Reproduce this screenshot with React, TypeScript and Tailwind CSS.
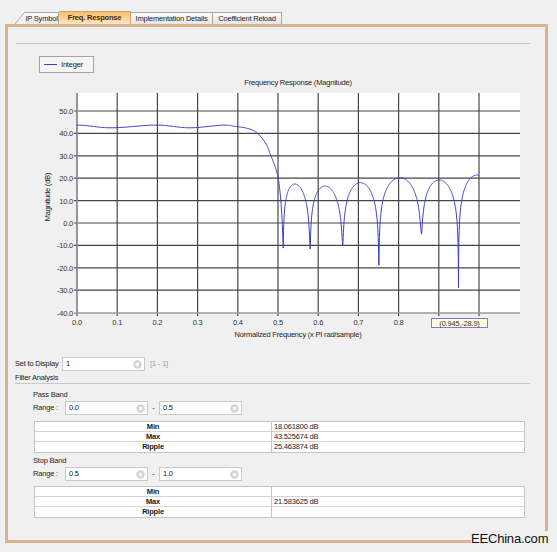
import React from 'react';

// plot mapping (page coordinates)
const X0 = 77;
const XS = 402;
const Y0 = 223;
const YS = 2.24;
const fx = (f: number) => X0 + f * XS;
const fy = (d: number) => Y0 - d * YS;

type Pt = [number, number];

function catmull(pts: Pt[], steps: number): Pt[] {
  const out: Pt[] = [];
  for (let i = 0; i < pts.length - 1; i++) {
    const p0 = pts[Math.max(0, i - 1)];
    const p1 = pts[i];
    const p2 = pts[i + 1];
    const p3 = pts[Math.min(pts.length - 1, i + 2)];
    for (let s = 1; s <= steps; s++) {
      const t = s / steps;
      const t2 = t * t;
      const t3 = t2 * t;
      const c = (a: number, b: number, cc: number, d: number) =>
        0.5 * (2 * b + (-a + cc) * t + (2 * a - 5 * b + 4 * cc - d) * t2 + (-a + 3 * b - 3 * cc + d) * t3);
      out.push([c(p0[0], p1[0], p2[0], p3[0]), c(p0[1], p1[1], p2[1], p3[1])]);
    }
  }
  return out;
}

function buildCurve(): string {
  const pts: Pt[] = [];

  // passband ripple
  const pass: Pt[] = [[0, 43.7], [0.082, 42.5], [0.2, 43.7], [0.28, 42.5], [0.372, 43.7], [0.4, 43.0]];
  pts.push(pass[0]);
  for (let i = 0; i < pass.length - 1; i++) {
    const [f1, d1] = pass[i];
    const [f2, d2] = pass[i + 1];
    for (let s = 1; s <= 24; s++) {
      const t = s / 24;
      const m = (1 - Math.cos(Math.PI * t)) / 2;
      pts.push([f1 + (f2 - f1) * t, d1 + (d2 - d1) * m]);
    }
  }

  // transition band
  const trans: Pt[] = [
    [0.4, 43.0], [0.42, 42.4], [0.44, 41.2], [0.455, 39], [0.472, 34.8], [0.48, 31],
    [0.488, 27.5], [0.495, 24], [0.501, 19.5], [0.506, 12], [0.51, 2], [0.513, -11.2],
  ];
  pts.push(...catmull(trans, 10));

  // stopband lobes
  const nulls = [0.513, 0.58, 0.661, 0.751, 0.857, 0.949];
  const depths = [-11.2, -11.6, -10, -18.8, -5, -28.9];
  const peaks: Pt[] = [[0.542, 17.4], [0.617, 16.5], [0.705, 18], [0.803, 20.2], [0.901, 19.2], [0.995, 21.4]];
  for (let i = 0; i < nulls.length; i++) {
    const a = nulls[i];
    const b = i < nulls.length - 1 ? nulls[i + 1] : 1.041;
    const dl = depths[i];
    const dr = i < nulls.length - 1 ? depths[i + 1] : -10;
    const [pf, pv] = peaks[i];
    const p = (pf - a) / (b - a);
    const k = Math.log(0.5) / Math.log(p);
    const el = Math.pow(10, (dl - pv) / 10);
    const er = Math.pow(10, (dr - pv) / 10);
    const n = 160;
    for (let s = 1; s <= n; s++) {
      const t = s / n;
      const f = a + (b - a) * t;
      if (f > 1.0) break;
      const tw = Math.pow(t, k);
      const e = el * (1 - tw) + er * tw;
      const sn = Math.sin(Math.PI * tw);
      pts.push([f, pv + 10 * Math.log10(sn * sn + e)]);
    }
  }

  return pts.map(([f, d], i) => `${i === 0 ? 'M' : 'L'}${fx(f).toFixed(2)} ${fy(d).toFixed(2)}`).join(' ');
}

const CURVE = buildCurve();
const DB_TICKS = [50, 40, 30, 20, 10, 0, -10, -20, -30, -40];
const F_TICKS = [0, 1, 2, 3, 4, 5, 6, 7, 8, 9, 10];
// 0.9 and 1.0 tick labels sit under the data tooltip
const F_LABELS = [0, 1, 2, 3, 4, 5, 6, 7, 8];

function Chart() {
  return (
    <svg
      width={537}
      height={266}
      viewBox="8 76 537 266"
      className="block"
      fontFamily="Liberation Sans, Arial, sans-serif"
      fontSize={7.5}
      letterSpacing={-0.2}
    >
      <text x={298} y={85} textAnchor="middle" fill="#222">Frequency Response (Magnitude)</text>
      <rect x={77} y={93} width={443} height={220} fill="#ffffff" />
      {DB_TICKS.filter((d) => d > -40).map((d) => (
        <line key={d} x1={74} x2={520} y1={fy(d)} y2={fy(d)} stroke="#474747" strokeWidth={1.2} />
      ))}
      {F_TICKS.map((i) => (
        <line key={i} x1={fx(i / 10)} x2={fx(i / 10)} y1={93} y2={316} stroke="#474747" strokeWidth={1.2} />
      ))}
      <line x1={77} x2={77} y1={93} y2={316} stroke="#9a9a9a" strokeWidth={1.5} />
      <line x1={74} x2={520} y1={313} y2={313} stroke="#9a9a9a" strokeWidth={1.5} />
      {DB_TICKS.map((d) => (
        <text key={d} x={73} y={fy(d) + 3} textAnchor="end" fill="#333">{d.toFixed(1)}</text>
      ))}
      {F_LABELS.map((i) => (
        <text key={i} x={fx(i / 10)} y={325} textAnchor="middle" fill="#333">{(i / 10).toFixed(1)}</text>
      ))}
      <text x={50} y={197} textAnchor="middle" fill="#222" transform="rotate(-90 50 197)">Magnitude (dB)</text>
      <text x={298} y={337} textAnchor="middle" fill="#222">Normalized Frequency (x PI rad/sample)</text>
      <path d={CURVE} fill="none" stroke="#3d3dcc" strokeWidth={1} strokeLinejoin="round" />
      <rect x={431.5} y={318.5} width={56} height={9} fill="#ffffe4" stroke="#9a70c4" strokeWidth={1} />
      <text x={459.5} y={326} textAnchor="middle" fill="#333">(0.945,-28.9)</text>
    </svg>
  );
}

function ClearIcon() {
  return (
    <svg width={9} height={9} viewBox="0 0 9 9" className="block">
      <circle cx={4.5} cy={4.5} r={4.2} fill="#d4d4d4" />
      <path d="M3 3 L6 6 M6 3 L3 6" stroke="#ffffff" strokeWidth={1.1} />
    </svg>
  );
}

function Field({ value }: { value: string }) {
  return (
    <div className="w-[83px] h-[14px] border border-[#c9c9c9] bg-white flex items-center justify-between pl-[3px] pr-[2px]">
      <span className="text-[#222]">{value}</span>
      <ClearIcon />
    </div>
  );
}

function ResultTable({ rows }: { rows: [string, string][] }) {
  return (
    <div className="ml-[26px] w-[491px] border border-[#c4c4c4] bg-white">
      {rows.map(([label, value], i) => (
        <div
          key={label}
          className={`grid grid-cols-[237px_1fr] h-[10px] leading-[10px] ${i < rows.length - 1 ? 'border-b border-[#d4d4d4]' : ''}`}
        >
          <div className="text-center font-bold text-[#1a1a1a] border-r border-[#c4c4c4]">{label}</div>
          <div className="pl-[2px] text-[#222]">{value}</div>
        </div>
      ))}
    </div>
  );
}

function RangeRow({ from, to }: { from: string; to: string }) {
  return (
    <div className="ml-[25px] mt-[1px] h-[14px] flex items-center">
      <div className="w-[32px]">Range :</div>
      <Field value={from} />
      <div className="w-[11px] text-center">-</div>
      <Field value={to} />
    </div>
  );
}

function Tabs() {
  const tab = 'h-[12px] border-t border-r border-[#a9a9a9] bg-gradient-to-b from-[#fbfbfb] to-[#e6e6e6] flex items-center justify-center leading-none text-[#222]';
  return (
    <div className="h-[24px] pl-[15px] flex items-end">
      <svg width={10} height={12} viewBox="0 0 10 12" className="block">
        <path d="M0 12 L9.5 0.5 L10 0.5 L10 12 Z" fill="#f3f3f3" />
        <path d="M0 12 L9.5 0.5 L10 0.5" fill="none" stroke="#a9a9a9" strokeWidth={1} />
      </svg>
      <div className={`${tab} w-[34px]`}>IP Symbol</div>
      <div className="h-[13px] w-[72px] border-t border-r border-[#d6a470] bg-gradient-to-b from-[#f8bd6a] to-[#fde6c6] flex items-center justify-center font-bold text-[#4a2600] leading-none">
        Freq. Response
      </div>
      <div className={`${tab} w-[82px]`}>Implementation Details</div>
      <div className={`${tab} w-[69px]`}>Coefficient Reload</div>
    </div>
  );
}

export default function App() {
  return (
    <div className="relative w-[557px] h-[552px] overflow-hidden whitespace-nowrap bg-[#f0f0f0] font-['Liberation_Sans',Arial,sans-serif] text-[7.5px] tracking-[-0.2px] text-[#222]">
      <Tabs />
      <div className="ml-[5px] w-[543px] h-[519px] border-[3px] border-[#dab391] bg-[#f0f0f0] flex flex-col">
        <div className="mt-[16px] ml-[8px] w-[514px] h-px bg-[#c9c9c9]" />

        <div className="mt-[12px] ml-[31px] w-[55px] h-[17px] border border-[#a3a3a3] bg-[#f5f5f5] flex items-center">
          <div className="ml-[4px] w-[13px] h-px bg-[#3d3dcc]" />
          <span className="ml-[4px]">Integer</span>
        </div>

        <div className="mt-[3px]">
          <Chart />
        </div>

        <div className="mt-[15px] ml-[7px] h-[14px] flex items-center">
          <div className="w-[47px]">Set to Display</div>
          <Field value="1" />
          <span className="ml-[5px] text-[#9a9a9a]">[1 - 1]</span>
        </div>

        <div className="mt-[2px] ml-[7px] w-[515px] h-[11px] leading-[10px] border-b border-[#c9c9c9]">Filter Analysis</div>

        <div className="mt-[6px] ml-[25px] h-[10px] leading-[10px]">Pass Band</div>
        <RangeRow from="0.0" to="0.5" />
        <div className="mt-[6px]">
          <ResultTable rows={[['Min', '18.061800 dB'], ['Max', '43.525674 dB'], ['Ripple', '25.463874 dB']]} />
        </div>

        <div className="mt-[3px] ml-[25px] h-[10px] leading-[10px]">Stop Band</div>
        <RangeRow from="0.5" to="1.0" />
        <div className="mt-[5px]">
          <ResultTable rows={[['Min', ''], ['Max', '21.583625 dB'], ['Ripple', '']]} />
        </div>
      </div>

      <div className="absolute left-[471px] top-[531px] bg-[#f0f0f0] text-[13px] leading-[15px] tracking-[-0.2px] text-[#111]">
        EEChina.com
      </div>
    </div>
  );
}
